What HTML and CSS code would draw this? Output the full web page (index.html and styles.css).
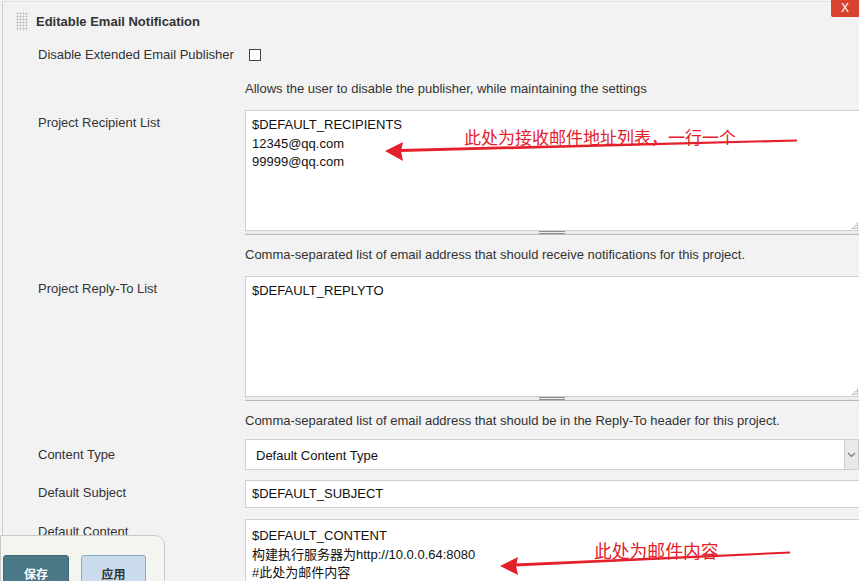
FILE: index.html
```html
<!DOCTYPE html>
<html>
<head>
<meta charset="utf-8">
<link rel="stylesheet" href="styles.css">
</head>
<body>
<div class="section">
  <div class="sec-head"><span class="grip"></span><span class="sec-title">Editable Email Notification</span></div>

  <div class="row row-check">
    <span class="lbl">Disable Extended Email Publisher</span>
    <span class="field"><input type="checkbox" class="cb"></span>
  </div>
  <div class="row desc first-desc"><span></span><span class="field">Allows the user to disable the publisher, while maintaining the settings</span></div>

  <div class="row row-area">
    <span class="lbl">Project Recipient List</span>
    <div class="field">
      <div class="ta-wrap"><textarea class="ta">$DEFAULT_RECIPIENTS
12345@qq.com
99999@qq.com</textarea><span class="grip-corner"></span></div>
      <div class="ta-bar"><span class="ta-handle"></span></div>
    </div>
  </div>
  <div class="row desc"><span></span><span class="field">Comma-separated list of email address that should receive notifications for this project.</span></div>

  <div class="row row-area">
    <span class="lbl">Project Reply-To List</span>
    <div class="field">
      <div class="ta-wrap"><textarea class="ta">$DEFAULT_REPLYTO</textarea><span class="grip-corner"></span></div>
      <div class="ta-bar"><span class="ta-handle"></span></div>
    </div>
  </div>
  <div class="row desc"><span></span><span class="field">Comma-separated list of email address that should be in the Reply-To header for this project.</span></div>

  <div class="row row-select">
    <span class="lbl">Content Type</span>
    <div class="field">
      <div class="select"><span class="select-text">Default Content Type</span><span class="select-arrow"><svg width="9" height="6" viewBox="0 0 9 6"><path d="M1 1 L4.5 4.5 L8 1" fill="none" stroke="#777" stroke-width="1.2"/></svg></span></div>
    </div>
  </div>

  <div class="row row-input">
    <span class="lbl">Default Subject</span>
    <div class="field"><div class="input">$DEFAULT_SUBJECT</div></div>
  </div>

  <div class="row row-content">
    <span class="lbl">Default Content</span>
    <div class="field">
      <div class="ta-wrap"><textarea class="ta ta-tall">$DEFAULT_CONTENT
构建执行服务器为http://10.0.0.64:8080
#此处为邮件内容</textarea></div>
    </div>
  </div>
</div>

<div class="close-x">X</div>

<svg class="arrows" width="859" height="581" viewBox="0 0 859 581">
  <path d="M797 139.5 L400 149 L400 152 L797 141.5 Z" fill="#e3202b"/>
  <polygon points="385,151 403,142 401,151 403,161" fill="#e3202b"/>
  <path d="M790 551.5 L515 563.5 L515 566.5 L790 553.5 Z" fill="#e3202b"/>
  <polygon points="500,566 518,557 516,566 518,575" fill="#e3202b"/>
</svg>
<div class="note note1">此处为接收邮件地址列表，一行一个</div>
<div class="note note2">此处为邮件内容</div>

<div class="bottom-bar">
  <button class="btn btn-save">保存</button>
  <button class="btn btn-apply">应用</button>
</div>
</body>
</html>
```

FILE: styles.css
```css
html, body {
  margin: 0;
  padding: 0;
  width: 859px;
  height: 581px;
  overflow: hidden;
  background: #f2f2f2;
  font-family: "Liberation Sans", Arial, "Noto Sans CJK SC", sans-serif;
  font-size: 13px;
  color: #333;
}

.section {
  margin: 1px 0 0 2px;
  border-left: 1px solid #cdcdcd;
  border-top: 1px solid #e2e2e2;
  height: 700px;
}

.sec-head {
  display: flex;
  align-items: center;
  height: 24px;
  margin-top: 7px;
  padding-left: 13px;
  gap: 8px;
}

.grip {
  width: 12px;
  height: 19px;
  background-image: radial-gradient(circle, #b9b9b9 0.9px, transparent 1.1px);
  background-size: 3px 3px;
}

.sec-title {
  font-weight: bold;
  color: #333;
}

.row {
  display: grid;
  grid-template-columns: 207px 615px;
  padding-left: 35px;
  line-height: 16px;
}

.row-check {
  margin-top: 13px;
  align-items: center;
  height: 18px;
}

.cb {
  appearance: none;
  -webkit-appearance: none;
  display: block;
  width: 12px;
  height: 12px;
  margin: 0 0 0 4px;
  border: 1px solid #444;
  background: #fff;
  box-sizing: border-box;
}

.desc { margin-top: 12px; }
.first-desc { margin-top: 17px; }

.row-area { margin-top: 13px; }
.row-area .lbl { padding-top: 5px; }

.ta-wrap {
  position: relative;
}

.ta {
  display: block;
  box-sizing: border-box;
  width: 100%;
  height: 121px;
  margin: 0;
  padding: 5px 6px 4px;
  border: 1px solid #cfcfcf;
  background: #fff;
  font-family: "Liberation Sans", Arial, "Noto Sans CJK SC", sans-serif;
  font-size: 13px;
  line-height: 18.5px;
  color: #111;
  resize: none;
  overflow: hidden;
  outline: none;
}

.ta-tall { height: 140px; padding-top: 7px; }

.grip-corner {
  position: absolute;
  right: 2px;
  bottom: 2px;
  width: 7px;
  height: 7px;
  background-image: radial-gradient(circle, #aaa 0.8px, transparent 1px);
  background-size: 2.5px 2.5px;
  clip-path: polygon(100% 0, 100% 100%, 0 100%);
}

.ta-bar {
  height: 3px;
  background: #ececec;
  border-bottom: 1px solid #b9b9b9;
  display: flex;
  justify-content: center;
}

.ta-handle {
  width: 26px;
  height: 1px;
  border-top: 1px solid #8d8d8d;
  border-bottom: 1px solid #8d8d8d;
  margin-left: -2px;
}

.row-select { margin-top: 10px; }
.row-select .lbl { padding-top: 8px; }

.select {
  display: flex;
  height: 31px;
  box-sizing: border-box;
  border: 1px solid #cfcfcf;
  background: #fff;
  margin-right: 1px;
}

.select-text {
  flex: 1;
  padding-left: 10px;
  line-height: 31px;
  color: #111;
}

.select-arrow {
  width: 13px;
  background: #e9e9e9;
  border-left: 1px solid #cfcfcf;
  display: flex;
  align-items: center;
  justify-content: center;
}

.row-input { margin-top: 10px; }
.row-input .lbl { padding-top: 5px; }

.input {
  height: 28px;
  box-sizing: border-box;
  border: 1px solid #cfcfcf;
  background: #fff;
  padding-left: 6px;
  line-height: 26px;
  color: #111;
}

.row-content { margin-top: 11px; }
.row-content .lbl { padding-top: 5px; }

.close-x {
  position: absolute;
  top: 0;
  right: 0;
  width: 28px;
  height: 17px;
  background: #d8432f;
  color: #fff;
  font-size: 12px;
  line-height: 16px;
  text-align: center;
  border-radius: 0 0 0 2px;
}

.arrows {
  position: absolute;
  left: 0;
  top: 0;
  pointer-events: none;
}

.note {
  position: absolute;
  color: #e3202b;
  font-family: "Noto Sans CJK SC", serif;
  font-size: 17px;
  line-height: 20px;
  white-space: nowrap;
}

.note1 { left: 464px; top: 127px; }
.note2 { left: 594px; top: 540px; font-size: 17.8px; }

.bottom-bar {
  position: absolute;
  left: 0;
  top: 535px;
  width: 165px;
  height: 70px;
  box-sizing: border-box;
  border: 1px solid #c9c9c9;
  border-radius: 0 10px 0 0;
  background: #f5f5ef;
  display: flex;
  gap: 12px;
  padding: 19px 0 0 2px;
  align-items: flex-start;
}

.btn {
  height: 32px;
  border-radius: 3px;
  font-family: "Noto Sans CJK SC", sans-serif;
  font-size: 12px;
  font-weight: bold;
  padding: 4px 0 0;
  margin: 0;
}

.btn-save {
  width: 66px;
  background: #4a7886;
  border: 1px solid #3e6976;
  color: #fff;
}

.btn-apply {
  width: 65px;
  background: #c9dbec;
  border: 1px solid #8ea9c0;
  color: #333;
}
```
